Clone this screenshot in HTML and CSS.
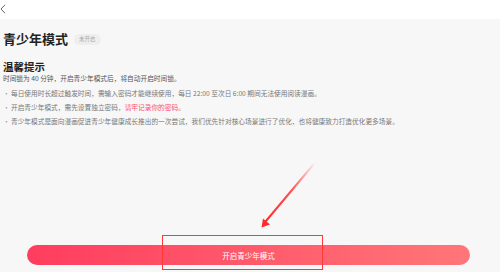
FILE: index.html
```html
<!DOCTYPE html>
<html lang="zh-CN">
<head>
    <meta charset="UTF-8">
    <meta name="viewport" content="width=device-width, initial-scale=1.0">
    <title>青少年模式</title>
    <link rel="stylesheet" href="styles.css">
</head>
<body>
    <div class="page">
        <!-- Top bar -->
        <header class="topbar">
            <svg class="back" width="6" height="10" viewBox="0 0 6 10">
                <path d="M5 0.8 L1 5 L5 9.2" fill="none" stroke="#555" stroke-width="0.9"/>
            </svg>
        </header>

        <main class="content">
            <div class="title-row">
                <h1>青少年模式</h1>
                <span class="tag">未开启</span>
            </div>

            <section class="tips">
                <h2>温馨提示</h2>
                <p class="lead">时间锁为 40 分钟，开启青少年模式后，将自动开启时间锁。</p>
                <ul>
                    <li>每日使用时长超过触发时间，需输入密码才能继续使用，每日 22:00 至次日 6:00 期间无法使用阅读漫画。</li>
                    <li>开启青少年模式，需先设置独立密码，<span class="warn">请牢记录你的密码。</span></li>
                    <li>青少年模式是面向漫画促进青少年健康成长推出的一次尝试，我们优先针对核心场景进行了优化，也将健康致力打造优化更多场景。</li>
                </ul>
            </section>

            <div class="action">
                <button type="button">开启青少年模式</button>
            </div>
        </main>

        <!-- Annotation overlay -->
        <svg class="pointer" width="500" height="272" viewBox="0 0 500 272">
            <defs>
                <linearGradient id="fade" x1="313" y1="165" x2="264" y2="224" gradientUnits="userSpaceOnUse">
                    <stop offset="0" stop-color="#ff3b3b" stop-opacity="0.1"/>
                    <stop offset="0.45" stop-color="#ff3b3b" stop-opacity="0.9"/>
                    <stop offset="1" stop-color="#ff2b2b"/>
                </linearGradient>
            </defs>
            <path d="M313 165 L266 221" stroke="url(#fade)" stroke-width="2" stroke-linecap="round"/>
            <path d="M261.5 227.5 L263 218.5 L270 224.5 Z" fill="#ff2b2b"/>
        </svg>
        <div class="highlight"></div>
    </div>
</body>
</html>
```

FILE: styles.css
```css
* {
    margin: 0;
    padding: 0;
    box-sizing: border-box;
}

body {
    font-family: 'Noto Sans CJK SC', 'Noto Sans', sans-serif;
    background: #f7f7f7;
    color: #333;
}

.page {
    position: relative;
    width: 500px;
    height: 272px;
    display: flex;
    flex-direction: column;
    overflow: hidden;
}

.topbar {
    height: 19px;
    background: #fff;
    display: flex;
    align-items: center;
    padding-left: 0;
    flex-shrink: 0;
}

.back {
    display: block;
    margin-top: -2px;
}

.content {
    flex: 1;
    display: flex;
    flex-direction: column;
    padding: 0 3px;
}

.title-row {
    display: flex;
    align-items: center;
    gap: 6px;
    margin-top: 12px;
}

h1 {
    font-size: 13px;
    line-height: 16px;
    font-weight: bold;
    color: #222;
}

.tag {
    display: inline-block;
    height: 11px;
    line-height: 11px;
    padding: 0 5px;
    font-size: 5.5px;
    color: #aaa;
    background: #eeeeee;
    border-radius: 6px;
}

.tips h2 {
    margin-top: 12.5px;
    font-size: 10.5px;
    line-height: 13px;
    font-weight: bold;
    color: #222;
}

.lead {
    margin-top: 1px;
    font-size: 6.7px;
    line-height: 9px;
    color: #555;
}

.tips ul {
    list-style: none;
    margin-top: 3.5px;
}

.tips li {
    position: relative;
    padding-left: 8px;
    font-size: 6.7px;
    line-height: 14px;
    color: #777;
}

.tips li::before {
    content: "·";
    position: absolute;
    left: 0;
    color: #999;
}

.warn {
    color: #ff4d6d;
}

.action {
    margin-top: auto;
    padding: 0 27px 7px 24px;
}

.action button {
    width: 100%;
    height: 20px;
    border: none;
    border-radius: 10px;
    background: linear-gradient(90deg, #ff3d5e, #ff7679);
    color: #fff;
    font-family: inherit;
    font-size: 7.5px;
    cursor: pointer;
}

.pointer {
    position: absolute;
    left: 0;
    top: 0;
    pointer-events: none;
}

.highlight {
    position: absolute;
    left: 162px;
    top: 235px;
    width: 161px;
    height: 35px;
    border: 1.5px solid #ff3838;
    pointer-events: none;
}
```
